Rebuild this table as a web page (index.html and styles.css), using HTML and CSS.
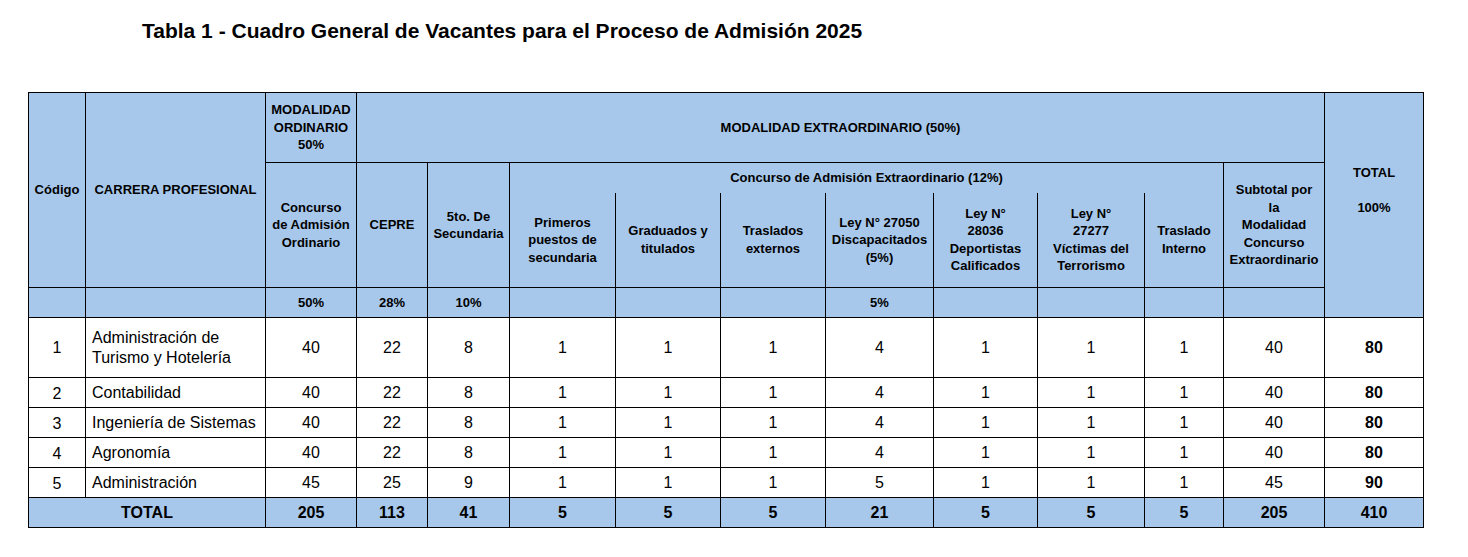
FILE: index.html
```html
<!DOCTYPE html>
<html lang="es">
<head>
<meta charset="utf-8">
<title>Tabla 1 - Cuadro General de Vacantes</title>
<link rel="stylesheet" href="styles.css">
</head>
<body>
<div class="page">
  <h1 class="title">Tabla 1 - Cuadro General de Vacantes para el Proceso de Admisión 2025</h1>
  <table class="vac">
    <colgroup>
      <col class="c-cod"><col class="c-car"><col class="c-ord"><col class="c-cep"><col class="c-5to">
      <col class="c-pri"><col class="c-gra"><col class="c-tra"><col class="c-l50"><col class="c-l36">
      <col class="c-l77"><col class="c-tin"><col class="c-sub"><col class="c-tot">
    </colgroup>
    <thead>
      <tr class="h1">
        <th rowspan="3">Código</th>
        <th rowspan="3">CARRERA PROFESIONAL</th>
        <th>MODALIDAD<br>ORDINARIO<br>50%</th>
        <th colspan="10">MODALIDAD EXTRAORDINARIO (50%)</th>
        <th rowspan="4" class="tot-h">TOTAL<br><br>100%</th>
      </tr>
      <tr class="h2">
        <th rowspan="2">Concurso<br>de Admisión<br>Ordinario</th>
        <th rowspan="2">CEPRE</th>
        <th rowspan="2">5to. De<br>Secundaria</th>
        <th colspan="7" class="open-bottom">Concurso de Admisión Extraordinario (12%)</th>
        <th rowspan="2">Subtotal por<br>la<br>Modalidad<br>Concurso<br>Extraordinario</th>
      </tr>
      <tr class="h3">
        <th>Primeros<br>puestos de<br>secundaria</th>
        <th>Graduados y<br>titulados</th>
        <th>Traslados<br>externos</th>
        <th>Ley N° 27050<br>Discapacitados<br>(5%)</th>
        <th>Ley N°<br>28036<br>Deportistas<br>Calificados</th>
        <th>Ley N°<br>27277<br>Víctimas del<br>Terrorismo</th>
        <th>Traslado<br>Interno</th>
      </tr>
      <tr class="h4">
        <th></th><th></th><th>50%</th><th>28%</th><th>10%</th>
        <th></th><th></th><th></th><th>5%</th><th></th><th></th><th></th><th></th>
      </tr>
    </thead>
    <tbody>
      <tr class="r-tall">
        <td class="cod">1</td><td class="car">Administración de<br>Turismo y Hotelería</td>
        <td>40</td><td>22</td><td>8</td><td>1</td><td>1</td><td>1</td><td>4</td><td>1</td><td>1</td><td>1</td><td>40</td><td class="tot">80</td>
      </tr>
      <tr>
        <td class="cod">2</td><td class="car">Contabilidad</td>
        <td>40</td><td>22</td><td>8</td><td>1</td><td>1</td><td>1</td><td>4</td><td>1</td><td>1</td><td>1</td><td>40</td><td class="tot">80</td>
      </tr>
      <tr>
        <td class="cod">3</td><td class="car">Ingeniería de Sistemas</td>
        <td>40</td><td>22</td><td>8</td><td>1</td><td>1</td><td>1</td><td>4</td><td>1</td><td>1</td><td>1</td><td>40</td><td class="tot">80</td>
      </tr>
      <tr>
        <td class="cod">4</td><td class="car">Agronomía</td>
        <td>40</td><td>22</td><td>8</td><td>1</td><td>1</td><td>1</td><td>4</td><td>1</td><td>1</td><td>1</td><td>40</td><td class="tot">80</td>
      </tr>
      <tr>
        <td class="cod">5</td><td class="car">Administración</td>
        <td>45</td><td>25</td><td>9</td><td>1</td><td>1</td><td>1</td><td>5</td><td>1</td><td>1</td><td>1</td><td>45</td><td class="tot">90</td>
      </tr>
    </tbody>
    <tfoot>
      <tr class="r-total">
        <td colspan="2">TOTAL</td>
        <td>205</td><td>113</td><td>41</td><td>5</td><td>5</td><td>5</td><td>21</td><td>5</td><td>5</td><td>5</td><td>205</td><td>410</td>
      </tr>
    </tfoot>
  </table>
</div>
</body>
</html>
```

FILE: styles.css
```css
html, body {
  margin: 0;
  padding: 0;
  background: #ffffff;
}

.page {
  padding: 0 0 0 28px;
  font-family: "Liberation Sans", Arial, sans-serif;
  color: #000;
}

.title {
  margin: 0;
  padding: 20px 0 0 114px;
  height: 92px;
  box-sizing: border-box;
  font-size: 21px;
  line-height: 22px;
  font-weight: bold;
}

.vac {
  border-collapse: collapse;
  table-layout: fixed;
  width: 1395px;
}

.c-cod { width: 57px; }
.c-car { width: 180px; }
.c-ord { width: 91px; }
.c-cep { width: 71px; }
.c-5to { width: 82px; }
.c-pri { width: 106px; }
.c-gra { width: 105px; }
.c-tra { width: 105px; }
.c-l50 { width: 108px; }
.c-l36 { width: 104px; }
.c-l77 { width: 107px; }
.c-tin { width: 79px; }
.c-sub { width: 101px; }
.c-tot { width: 99px; }

.vac th,
.vac td {
  border: 1px solid #000;
  padding: 0;
  text-align: center;
  vertical-align: middle;
}

.vac th {
  background: #a7c8eb;
  font-size: 13px;
  line-height: 17.5px;
  font-weight: bold;
  white-space: nowrap;
}

.vac .open-bottom {
  border-bottom-style: hidden;
}

.h1 { height: 70px; }
.h2 { height: 30px; }
.h3 { height: 95px; }
.h4 { height: 30px; }

.vac .tot-h {
  vertical-align: top;
  padding-top: 71px;
}

.vac td {
  font-size: 16px;
  line-height: 20px;
  height: 29px;
}

.vac tbody tr.r-tall td {
  height: 59px;
}

.vac td.cod {
  padding-top: 3px;
  height: 26px;
}

.vac tbody tr.r-tall td.cod {
  padding-top: 0;
  height: 59px;
}

.vac td.car {
  text-align: left;
  padding-left: 6px;
  white-space: nowrap;
}

.vac td.tot {
  font-weight: bold;
}

.r-total td {
  background: #a7c8eb;
  font-weight: bold;
}
```
